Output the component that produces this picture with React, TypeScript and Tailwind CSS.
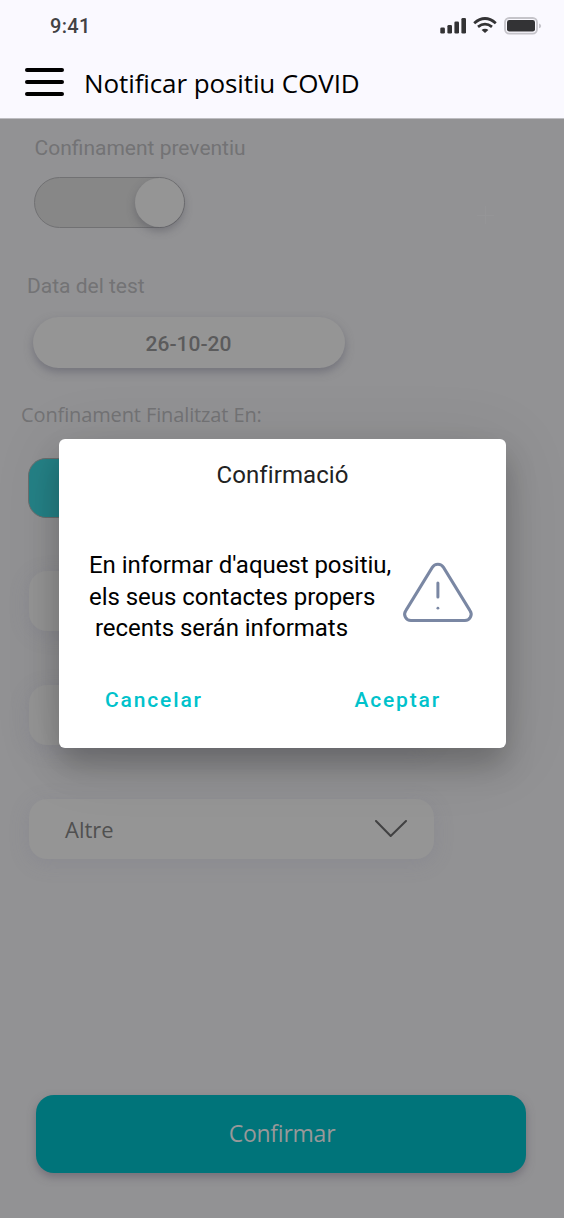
import React from "react";

const segoe = "font-['Open_Sans','Noto_Sans',sans-serif]";

function StatusBar() {
  return (
    <div className="flex h-[52px] items-center justify-between pl-[50px] pr-[22px]">
      <span className="text-[20px] font-medium leading-[24px] tracking-[0.3px] text-[#424244]">9:41</span>
      <svg width="102" height="20" viewBox="0 0 102 20" fill="none">
        <g fill="#333335">
          <rect x="0.3" y="11.5" width="4.6" height="6" rx="1.3" />
          <rect x="7.4" y="9" width="4.6" height="8.5" rx="1.3" />
          <rect x="14.4" y="5.5" width="4.6" height="12" rx="1.3" />
          <rect x="21.4" y="2" width="4.6" height="15.5" rx="1.3" />
          <path d="M45 12.7q2 0 3.4 1.2L45 17l-3.4-3.1q1.4-1.2 3.4-1.2z" />
        </g>
        <g stroke="#333335" strokeWidth="2.8">
          <path d="M38 10.9Q45 5.3 52 10.9" />
          <path d="M34.2 7.2Q45 -2.2 55.8 7.2" />
        </g>
        <rect x="65" y="2" width="32" height="15.6" rx="4.3" stroke="#c5c4ca" strokeWidth="1.8" />
        <rect x="67" y="4" width="28" height="11.6" rx="2.3" fill="#333335" />
        <path d="M99 7.5q2.2 0.8 2.2 2.4T99 12.3z" fill="#c5c4ca" />
      </svg>
    </div>
  );
}

function Header() {
  return (
    <header className="h-[119px] border-b border-[#bdbdc1] bg-[#faf9ff]">
      <StatusBar />
      <div className="flex h-[61px] items-center pl-[25px]">
        <button className="mb-[1px] flex w-[39px] flex-col gap-2" aria-label="Menu">
          <span className="h-1 rounded-full bg-black" />
          <span className="h-1 rounded-full bg-black" />
          <span className="h-1 rounded-full bg-black" />
        </button>
        <h1 className={`${segoe} ml-[20px] whitespace-nowrap text-[26px] leading-[34px] tracking-[-0.1px] text-black`}>
          Notificar positiu COVID
        </h1>
      </div>
    </header>
  );
}

const optionBox =
  "flex h-[60px] w-[405px] items-center justify-between rounded-[18px] bg-[#959595] pl-9 pr-[27px] shadow-[0_4px_20px_rgba(110,108,130,0.22)]";

function Form() {
  return (
    <main className="flex h-[1099px] flex-col items-start bg-[#929294] pt-[15px]">
      <p className="ml-[34.5px] text-[21px] leading-[28px] text-[#737375]">Confinament preventiu</p>
      <div className="ml-[34px] mt-[15px] flex items-center">
        <div className="flex h-[51px] w-[151px] justify-end rounded-full border border-[#717173] bg-[#878787]">
          <div className="size-[49px] rounded-full bg-[#959595] shadow-[0_4px_8px_rgba(70,70,80,0.4)]" />
        </div>
        <svg className="ml-[292px] mt-[24px]" width="17" height="18" viewBox="0 0 17 18" stroke="#959597" strokeWidth="1">
          <path d="M8.5 0v18M0 9.5h17" />
        </svg>
      </div>
      <p className="ml-[27px] mt-[44px] text-[21px] leading-[28px] text-[#737375]">Data del test</p>
      <div className="ml-[33px] mt-[17px] flex h-[50.5px] w-[312px] items-center justify-center rounded-full bg-[#959595] pr-[1px] pt-[4px] text-[21px] font-medium text-[#5b5b5c] shadow-[0_4px_8px_rgba(85,85,100,0.5)]">
        26-10-20
      </div>
      <p className={`${segoe} ml-[21px] mt-[33.5px] text-[20px] leading-[28px] tracking-[-0.12px] text-[#737375]`}>
        Confinament Finalitzat En:
      </p>
      <div className="ml-[28px] mt-[29px] h-[60px] w-[405px] rounded-[18px] border border-[#6d6d6d] bg-[#258287]" />
      <div className={`ml-[29px] mt-[53px] ${optionBox}`} />
      <div className={`ml-[29px] mt-[54px] ${optionBox}`} />
      <div className={`ml-[29px] mt-[54px] ${optionBox}`}>
        <span className={`${segoe} text-[22px] text-[#505050]`}>Altre</span>
        <svg width="32" height="18" viewBox="0 0 32 18" fill="none" stroke="#414142" strokeWidth="2" strokeLinecap="round" strokeLinejoin="round">
          <path d="M1 1 15.7 16 31 1" />
        </svg>
      </div>
      <button className={`${segoe} ml-[36px] mt-[236px] h-[78px] w-[490px] rounded-[18px] bg-[#00747a] pl-[2px] pb-[2px] text-[23px] tracking-[-0.25px] text-[#989899] shadow-[0_4px_8px_rgba(85,80,95,0.5)]`}>
        Confirmar
      </button>
    </main>
  );
}

function Dialog() {
  return (
    <section
      role="dialog"
      className="absolute left-[59px] top-[439px] flex h-[309px] w-[447px] flex-col rounded-[6px] bg-white shadow-[0_18px_30px_rgba(0,0,0,0.22),0_8px_70px_rgba(0,0,0,0.1)]"
    >
      <h2 className="mt-[20px] text-center text-[24px] leading-[32px] tracking-[0.1px] text-[#222222]">Confirmació</h2>
      <div className="mt-[59px] flex h-[96px] pl-[30px]">
        <p className="w-[315px] whitespace-pre text-[24px] leading-[31.5px] tracking-[-0.04px] text-black">
          {"En informar d'aquest positiu,\nels seus contactes propers\n recents serán informats"}
        </p>
        <svg className="mt-[12px] -ml-[1px] overflow-visible" width="70" height="62" viewBox="0 0 70 62" fill="none" stroke="#7a87a3" strokeWidth="3" strokeLinecap="round" strokeLinejoin="round">
          <path d="M29.3 5.4a6.6 6.6 0 0 1 11.2 0L67 48.6a6.3 6.3 0 0 1-5.4 9.9H8.2A6.3 6.3 0 0 1 2.8 48.6z" />
          <path d="M34.9 21v14" />
          <circle cx="34.9" cy="46.2" r="1.4" fill="#7a87a3" stroke="none" />
        </svg>
      </div>
      <div className="mt-[40px] flex justify-between pl-[46px] pr-[65px] text-[21px] font-medium leading-[28px] tracking-[1.85px] text-[#00c2cb]">
        <button>Cancelar</button>
        <button>Aceptar</button>
      </div>
    </section>
  );
}

export default function App() {
  return (
    <div className="relative h-[1218px] w-[564px] overflow-hidden font-[Roboto,sans-serif]">
      <Header />
      <Form />
      <Dialog />
    </div>
  );
}
